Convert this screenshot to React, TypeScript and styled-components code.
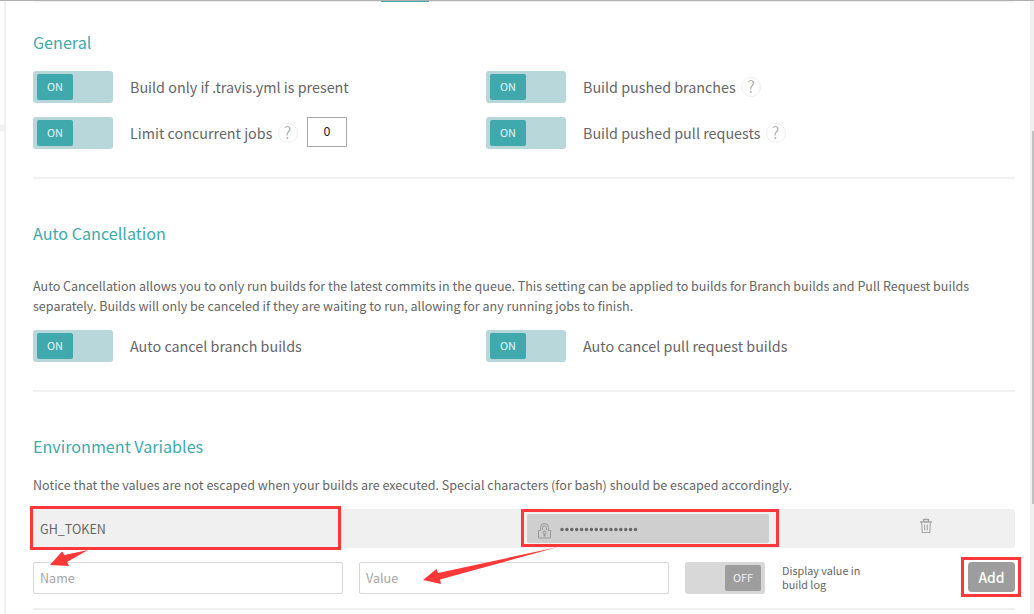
import React from 'react';
import styled, { createGlobalStyle } from 'styled-components';

const Global = createGlobalStyle`
  * { box-sizing: border-box; }
  body {
    margin: 0;
    background: #fff;
    color: #666;
    font-family: "Noto Sans CJK SC", "Open Sans", sans-serif;
    overflow: hidden;
  }
`;

const Page = styled.div`
  position: relative;
  display: flex;
  width: 1034px;
  height: 614px;
  overflow: hidden;
  border-top: 1px solid #b0b0b0;
`;

const Sidebar = styled.div`
  width: 6px;
  flex: none;
  border-right: 2px solid #f1f1f1;
  padding-top: 124px;
`;

const SidebarRule = styled.div`
  height: 6px;
  background: #f1f1f1;
`;

const Main = styled.main`
  flex: 1;
  padding: 0 15px 0 27px;
`;

const TabStrip = styled.div`
  height: 1px;
  background: #f1f1f1;
  padding-left: 348px;
`;

const ActiveTab = styled.div`
  width: 48px;
  height: 1px;
  background: #3fa9ae;
`;

const Scrollbar = styled.div`
  width: 4px;
  flex: none;
  background: #f0f0f0;
  padding: 130px 0 0 2px;
`;

const Thumb = styled.div`
  height: 373px;
  background: #c1c1c1;
`;

const Section = styled.section<{ $height: number }>`
  height: ${(p) => p.$height}px;
  border-bottom: 2px solid #f1f1f1;
`;

const Heading = styled.h2<{ $top: number; $bottom: number }>`
  margin: 0;
  padding-top: ${(p) => p.$top}px;
  margin-bottom: ${(p) => p.$bottom}px;
  color: #3fa9ae;
  font-size: 16.15px;
  font-weight: 400;
  line-height: 24px;
`;

const Grid = styled.div`
  display: grid;
  grid-template-columns: 453px 1fr;
  row-gap: 14px;
`;

const Setting = styled.div`
  display: flex;
  align-items: center;
  height: 32px;
`;

const Track = styled.div<{ $on: boolean }>`
  display: flex;
  flex: none;
  justify-content: ${(p) => (p.$on ? 'flex-start' : 'flex-end')};
  width: 80px;
  height: 32px;
  padding: 3px 4px;
  border-radius: 3px;
  background: ${(p) => (p.$on ? '#b7d7da' : '#d8d8d8')};
`;

const Knob = styled.span<{ $on: boolean }>`
  width: 36px;
  height: 26px;
  border-radius: 2px;
  background: ${(p) => (p.$on ? '#3fa9ae' : '#9d9d9d')};
  color: ${(p) => (p.$on ? '#e3f5f6' : '#f1f1f1')};
  font-size: 10.9px;
  line-height: 24px;
  text-align: center;
`;

const Label = styled.span`
  margin-left: 17px;
  font-size: 14.33px;
  line-height: 24px;
  white-space: nowrap;
`;

const Help = styled.span`
  width: 20px;
  height: 20px;
  margin-left: 5.2px;
  border: 1px solid #eee;
  border-radius: 50%;
  color: #999;
  font-size: 16.5px;
  font-weight: 300;
  line-height: 17px;
  text-align: center;
`;

const Count = styled.span`
  width: 40px;
  height: 30px;
  margin: -2px 0 0 9.3px;
  border: 1px solid #a9a9a9;
  color: #222;
  font-size: 12.5px;
  line-height: 26px;
  text-align: center;
`;

const Text = styled.p<{ $gap: number }>`
  margin: 0 0 ${(p) => p.$gap}px;
  font-size: 12.545px;
  line-height: 20px;
  white-space: nowrap;
`;

const Variable = styled.div`
  display: flex;
  height: 39px;
  padding: 5px 0 0 7px;
  border-radius: 2px;
  background: #f0f0f0;
`;

const VariableName = styled.span`
  width: 487px;
  font-size: 12.55px;
  line-height: 30px;
`;

const Secret = styled.div`
  display: flex;
  width: 242px;
  height: 29px;
  padding-left: 10px;
  border-radius: 2px;
  background: #cfcfcf;
`;

const Dots = styled.svg`
  margin: 12px 0 0 8px;
`;

const LockIcon = styled.svg`
  margin-top: 8px;
`;

const TrashIcon = styled.svg`
  margin: 3px 0 0 149.5px;
`;

const Form = styled.form`
  display: flex;
  margin-top: 14px;
`;

const Field = styled.input`
  width: 310px;
  height: 32px;
  margin: 0 16px 0 0;
  padding: 0 6px 1px;
  border: 1px solid #d8d8d8;
  border-radius: 2px;
  font: 12.55px "Noto Sans CJK SC", sans-serif;
  outline: none;
  &::placeholder { color: #a5a5a5; opacity: 1; }
`;

const Hint = styled.span`
  width: 186px;
  padding: 1px 0 0 17px;
  font-size: 10.8px;
  line-height: 14px;
`;

const AddButton = styled.button`
  width: 47px;
  height: 30px;
  margin-left: auto;
  padding: 0;
  border: 0;
  border-radius: 4px;
  background: #9d9d9d;
  color: #fff;
  font: 500 13.9px/30px "Noto Sans CJK SC", sans-serif;
`;

const Highlight = styled.div<{ $x: number; $y: number; $w: number; $h: number }>`
  position: absolute;
  left: ${(p) => p.$x}px;
  top: ${(p) => p.$y - 1}px;
  width: ${(p) => p.$w}px;
  height: ${(p) => p.$h}px;
  border: 3px solid #fd3838;
`;

const Arrows = styled.svg`
  position: absolute;
  left: 0;
  top: -1px;
  pointer-events: none;
`;

function Toggle({ on = true }: { on?: boolean }) {
  return (
    <Track $on={on}>
      <Knob $on={on}>{on ? 'ON' : 'OFF'}</Knob>
    </Track>
  );
}

function Option({ label, help, children }: { label: string; help?: boolean; children?: React.ReactNode }) {
  return (
    <Setting>
      <Toggle />
      <Label>{label}</Label>
      {help && <Help>?</Help>}
      {children}
    </Setting>
  );
}

export default function App() {
  return (
    <Page>
      <Global />
      <Sidebar><SidebarRule /></Sidebar>
      <Main>
        <TabStrip><ActiveTab /></TabStrip>
        <Section $height={177}>
          <Heading $top={28} $bottom={17}>General</Heading>
          <Grid>
            <Option label="Build only if .travis.yml is present" />
            <Option label="Build pushed branches" help />
            <Option label="Limit concurrent jobs" help><Count>0</Count></Option>
            <Option label="Build pushed pull requests" help />
          </Grid>
        </Section>
        <Section $height={213}>
          <Heading $top={42} $bottom={31}>Auto Cancellation</Heading>
          <Text $gap={14}>
            Auto Cancellation allows you to only run builds for the latest commits in the queue. This setting can be applied to builds for Branch builds and Pull Request builds
            <br />
            separately. Builds will only be canceled if they are waiting to run, allowing for any running jobs to finish.
          </Text>
          <Grid>
            <Option label="Auto cancel branch builds" />
            <Option label="Auto cancel pull request builds" />
          </Grid>
        </Section>
        <Section $height={218}>
          <Heading $top={42} $bottom={17}>Environment Variables</Heading>
          <Text $gap={14}>
            Notice that the values are not escaped when your builds are executed. Special characters (for bash) should be escaped accordingly.
          </Text>
          <Variable>
            <VariableName>GH_TOKEN</VariableName>
            <Secret>
              <LockIcon width="15" height="18" viewBox="0 0 15 18" fill="none" stroke="#989898">
                <path d="M3 8.5H1.5V16h12V8.5H12" />
                <path d="M3.5 9V5.5a4 4 0 0 1 8 0V9M5.5 8V5.8a2 2 0 0 1 4 0V8" />
                <circle cx="7.5" cy="10.5" r="1.5" />
                <path d="M7.5 12v2.5" strokeWidth="2" />
              </LockIcon>
              <Dots width="80" height="8" fill="#666">
                {Array.from({ length: 16 }, (_, i) => (
                  <circle key={i} cx={2 + i * 4.9} cy="3.5" r="1.7" />
                ))}
              </Dots>
            </Secret>
            <TrashIcon width="14" height="18" viewBox="0 0 14 18" fill="none" stroke="#a4a4a4">
              <path d="M1 5h12M4.5 4.5V2.5h5v2" strokeWidth="1.3" />
              <path d="M2.7 6l.5 9.5h7.6l.5-9.5M5.7 7.5v6M8.3 7.5v6" strokeWidth="1.1" />
            </TrashIcon>
          </Variable>
          <Form>
            <Field placeholder="Name" />
            <Field placeholder="Value" />
            <Toggle on={false} />
            <Hint>Display value in<br />build log</Hint>
            <AddButton type="button">Add</AddButton>
          </Form>
        </Section>
      </Main>
      <Scrollbar><Thumb /></Scrollbar>
      <Highlight $x={30} $y={506} $w={311} $h={44} />
      <Highlight $x={521} $y={509} $w={258} $h={38} />
      <Highlight $x={961} $y={557} $w={60} $h={40} />
      <Arrows width="1034" height="614" fill="#fd3838">
        <path d="M50 565L62 551.5L64.5 555L88 550L67 562L69 566Z" />
        <path d="M423 580L436.5 569L438 573L558 547L440 579.5L441 584Z" />
      </Arrows>
    </Page>
  );
}
